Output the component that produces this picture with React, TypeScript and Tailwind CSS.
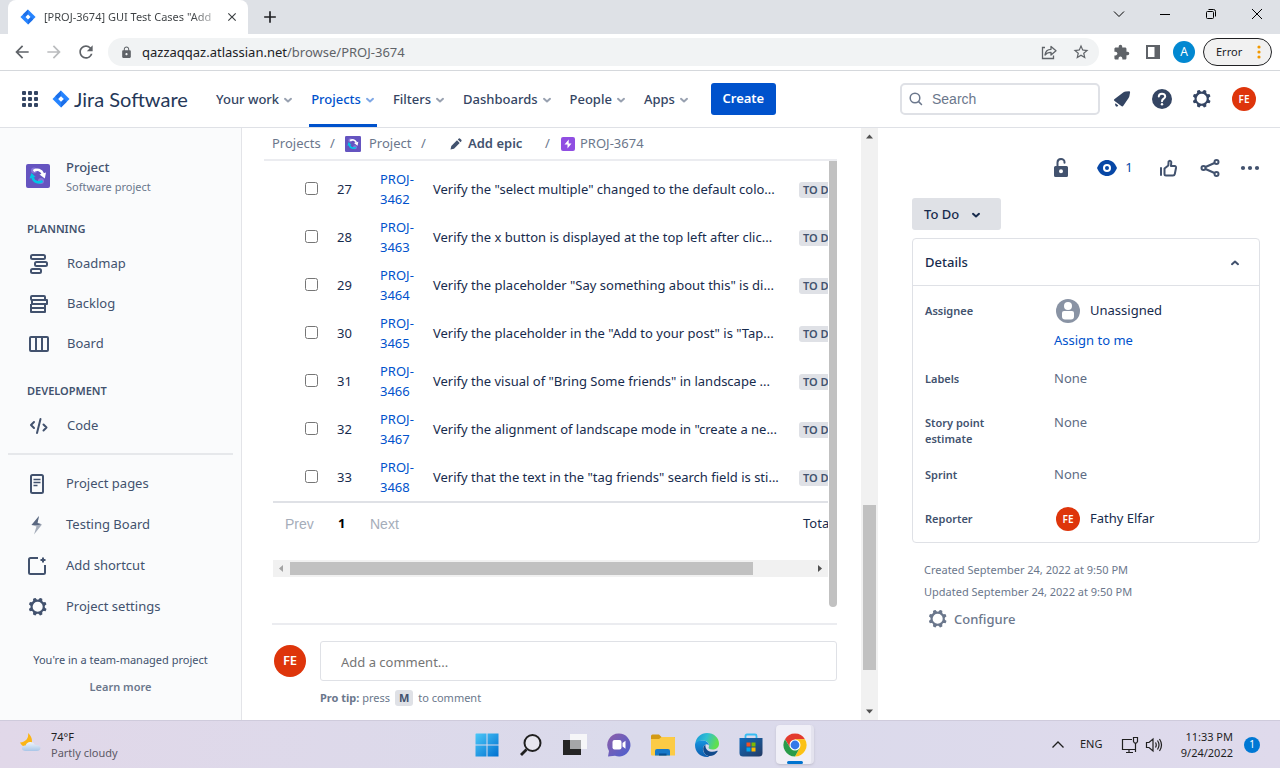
import React from "react";
import { MdArrowBack, MdArrowForward, MdRefresh, MdLock, MdStarBorder, MdExtension, MdClose, MdAdd } from "react-icons/md";

const GEAR =
  "M11.701 16.7a5.002 5.002 0 1 1 0-10.003 5.002 5.002 0 0 1 0 10.004m8.368-3.117a1.995 1.995 0 0 1-1.346-1.885c0-.876.563-1.613 1.345-1.885a.48.48 0 0 0 .315-.574 8.947 8.947 0 0 0-.836-1.993.477.477 0 0 0-.598-.195 2.04 2.04 0 0 1-1.29.08 1.988 1.988 0 0 1-1.404-1.395 2.04 2.04 0 0 1 .076-1.297.478.478 0 0 0-.196-.597 8.98 8.98 0 0 0-1.975-.826.479.479 0 0 0-.574.314 1.995 1.995 0 0 1-1.885 1.346 1.994 1.994 0 0 1-1.884-1.345.482.482 0 0 0-.575-.315c-.708.2-1.379.485-2.004.842a.47.47 0 0 0-.198.582A2.002 2.002 0 0 1 4.445 7.06a.478.478 0 0 0-.595.196 8.946 8.946 0 0 0-.833 1.994.48.48 0 0 0 .308.572 1.995 1.995 0 0 1 1.323 1.877c0 .867-.552 1.599-1.324 1.877a.479.479 0 0 0-.308.57 8.99 8.99 0 0 0 .723 1.79.477.477 0 0 0 .624.194c.595-.273 1.343-.264 2.104.238.117.077.225.185.302.3.527.8.512 1.58.198 2.188a.473.473 0 0 0 .168.628 8.946 8.946 0 0 0 2.11.897.474.474 0 0 0 .57-.313 1.995 1.995 0 0 1 1.886-1.353c.878 0 1.618.567 1.887 1.353a.475.475 0 0 0 .57.313 8.964 8.964 0 0 0 2.084-.883.473.473 0 0 0 .167-.631c-.318-.608-.337-1.393.191-2.195.077-.116.185-.225.302-.302.772-.511 1.527-.513 2.125-.23a.477.477 0 0 0 .628-.19 8.925 8.925 0 0 0 .728-1.793.478.478 0 0 0-.314-.573";

function Gear() {
  return (
    <svg viewBox="0 0 24 24" className="size-6 shrink-0" fill="currentColor" aria-hidden="true">
      <path fillRule="evenodd" d={GEAR} />
    </svg>
  );
}

function JiraMark({ className }: { className: string }) {
  return (
    <svg viewBox="0 0 18 18" className={className} aria-hidden="true">
      <path d="M9 0.5 17.5 9 9 17.5 0.5 9Z" fill="#2684ff" />
      <path d="M9 0.5 9 6 5.8 9 3.2 6.3Z" fill="#1d6fe8" />
      <path d="M9 17.5 9 12 12.2 9 14.8 11.7Z" fill="#1d6fe8" />
      <path d="M9 6.2 11.8 9 9 11.8 6.2 9Z" fill="#fff" />
    </svg>
  );
}

function ProjectMark({ className }: { className: string }) {
  return (
    <svg viewBox="0 0 24 24" className={className} aria-hidden="true">
      <rect width="24" height="24" rx="2" fill="#6554c0" />
      <circle cx="8" cy="6.5" r="3" fill="#8777d9" />
      <circle cx="15" cy="17" r="3" fill="#8777d9" />
      <path d="M7.500 7C11 4.500 15.500 6 17 10" fill="none" stroke="#fff" strokeWidth="2.600" />
      <path d="M13.500 10.500 20 8.500 18.800 14.500Z" fill="#fff" />
      <path d="M16.500 17C13 19.500 8 18.500 6.500 13.500" fill="none" stroke="#00c7e5" strokeWidth="2.600" />
      <path d="M3.500 14.500 5.500 9 9.500 13Z" fill="#00c7e5" />
    </svg>
  );
}

function Chevron() {
  return (
    <svg viewBox="0 0 10 8" className="h-2 w-2.5" fill="none" stroke="currentColor" strokeWidth="2" strokeLinecap="round" strokeLinejoin="round" aria-hidden="true">
      <path d="M2 2.800 5 5.500 8 2.800" />
    </svg>
  );
}

function Avatar({ className }: { className: string }) {
  return <span className={`flex shrink-0 items-center justify-center rounded-full bg-[#de350b] font-semibold text-white ${className}`}>FE</span>;
}

function BrowserChrome() {
  return (
    <header>
      <div className="flex h-[34px] items-end justify-between bg-[#dee1e6] pl-2">
        <div className="flex h-[34px] items-center">
          <div className="flex h-full w-60 items-center rounded-t-lg bg-white pr-2 pl-3">
            <JiraMark className="size-4 shrink-0" />
            <span className="ml-2 flex-1 bg-gradient-to-r from-[#3c4043] from-85% to-[#3c4043]/20 bg-clip-text text-[11px] whitespace-nowrap text-transparent">
              [PROJ-3674] GUI Test Cases "Add
            </span>
            <button aria-label="Close tab" className="ml-1.5 flex size-4 items-center justify-center text-[#3c4043]"><MdClose size={14} /></button>
          </div>
          <button aria-label="New tab" className="ml-3 text-[#202124]"><MdAdd size={20} /></button>
        </div>
        <div className="flex h-10 items-center text-black">
          <button aria-label="Search tabs" className="flex w-[46px] justify-center">
            <svg viewBox="0 0 12 12" className="size-3" fill="none" stroke="currentColor"><path d="M1 3.500 6 8.500 11 3.500" /></svg>
          </button>
          <button aria-label="Minimize" className="flex w-[46px] justify-center">
            <svg viewBox="0 0 12 12" className="size-3" fill="none" stroke="currentColor"><path d="M1 6.500H11" /></svg>
          </button>
          <button aria-label="Restore" className="flex w-[46px] justify-center">
            <svg viewBox="0 0 12 12" className="size-3" fill="none" stroke="currentColor"><rect x="1.500" y="3.500" width="7" height="7" rx="1" /><path d="M3.500 1.500H8.500Q10.500 1.500 10.500 3.500V8.500" /></svg>
          </button>
          <button aria-label="Close window" className="flex w-[46px] justify-center">
            <svg viewBox="0 0 12 12" className="size-3" fill="none" stroke="currentColor"><path d="M1 1 11 11M11 1 1 11" /></svg>
          </button>
        </div>
      </div>
      <div className="flex h-[37px] items-center border-b border-[#d5d8dc] bg-white pr-2 pl-3 text-[#5f6368]">
        <button aria-label="Back"><MdArrowBack size={20} /></button>
        <button aria-label="Forward" className="ml-3 text-[#babcbe]"><MdArrowForward size={20} /></button>
        <button aria-label="Reload" className="ml-3"><MdRefresh size={20} /></button>
        <div className="ml-3 flex h-7 flex-1 items-center rounded-full bg-[#f1f3f4] pr-[9px] pl-3">
          <MdLock size={13} />
          <div className="ml-[9px] flex-1 text-[13px] leading-5">
            <span className="text-[#202124]">qazzaqqaz.atlassian.net</span>/browse/PROJ-3674
          </div>
          <button aria-label="Share page">
            <svg viewBox="0 0 18 18" className="size-[18px]" fill="none" stroke="currentColor" strokeWidth="1.300">
              <path d="M5 4.500H2.500V15.500H13.500V12.500" />
              <path d="M5 12C5.500 8 8 6.300 11 6.300V3.500L16 7.800 11 12V9.300C8.500 9.300 6.500 10 5 12Z" strokeLinejoin="round" />
            </svg>
          </button>
          <button aria-label="Bookmark" className="ml-3.5"><MdStarBorder size={18} /></button>
        </div>
        <button aria-label="Extensions" className="ml-3.5"><MdExtension size={17} /></button>
        <button aria-label="Side panel" className="ml-[15px]">
          <svg viewBox="0 0 16 16" className="size-4"><path fill="currentColor" fillRule="evenodd" d="M1 1H15V15H1ZM3 3V13H9.500V3Z" /></svg>
        </button>
        <button className="ml-3 flex size-[22px] items-center justify-center rounded-full bg-[#0288d1] text-[12px] text-white">A</button>
        <button className="ml-2 flex h-7 w-[69px] items-center justify-between rounded-full border border-[#202124] bg-[#f1f1f1] pr-2.5 pl-3 text-[11px] text-[#202124]">
          Error
          <svg viewBox="0 0 4 14" className="h-3.5 w-1" fill="#f29900"><circle cx="2" cy="2" r="1.600" /><circle cx="2" cy="7" r="1.600" /><circle cx="2" cy="12" r="1.600" /></svg>
        </button>
      </div>
    </header>
  );
}

const MENU = ["Your work", "Projects", "Filters", "Dashboards", "People", "Apps"];

function JiraHeader() {
  return (
    <header className="flex h-[57px] items-center border-b border-[#dfe1e6] bg-white pr-6 pl-[22px] text-[#344563]">
      <button aria-label="App switcher">
        <svg viewBox="0 0 16 16" className="size-4" fill="currentColor">
          {[0, 6, 12].map((y) => [0, 6, 12].map((x) => <rect key={`${x}-${y}`} x={x} y={y} width="4" height="4" rx="1" />))}
        </svg>
      </button>
      <a href="#home" className="ml-[14px] flex items-center gap-1 text-[#253858]">
        <JiraMark className="size-[18px]" />
        <span className="w-[113px] font-['Lato','Open_Sans',sans-serif] text-[20px] leading-6 whitespace-nowrap">Jira Software</span>
      </a>
      <nav className="ml-[27px] flex h-full items-stretch gap-[14px]">
        {MENU.map((item) => (
          <button
            key={item}
            className={`flex items-center gap-1 border-b-[3px] px-0.5 pt-1 text-[13px] font-medium ${
              item === "Projects" ? "border-[#0052cc] text-[#0052cc]" : "border-transparent"
            }`}
          >
            {item}
            <span className="opacity-50"><Chevron /></span>
          </button>
        ))}
      </nav>
      <button className="ml-5 h-8 w-[65px] rounded-[3px] bg-[#0052cc] text-[13px] font-semibold text-white">Create</button>
      <div className="ml-auto flex h-8 w-[200px] items-center gap-2 rounded-[5px] border-2 border-[#dfe1e6] px-1.5 text-[#6b778c]">
        <svg viewBox="0 0 16 16" className="size-4 shrink-0" fill="none" stroke="currentColor" strokeWidth="1.500" strokeLinecap="round"><circle cx="7" cy="7" r="4.800" /><path d="M10.600 10.600 13.500 13.500" /></svg>
        <input aria-label="Search" placeholder="Search" className="w-full font-['Liberation_Sans',sans-serif] text-[14px] outline-none placeholder:text-[#6b778c]" />
      </div>
      <button aria-label="Notifications" className="ml-2.5">
        <svg viewBox="0 0 24 24" className="size-6" fill="currentColor">
          <path d="M4.300 12.200 13.500 5.300Q14.500 4.500 15.800 4.400L19 4.200Q20.300 4.200 20.100 5.200L19.500 8.500Q19.400 9.800 18.600 10.900L13.500 18.500Q12.500 20 11.300 19L4.300 13.800Q3.500 13 4.300 12.200Z" />
          <path d="M5.500 16.300 8.300 18.600Q7.300 20.400 5.800 19.300 4.500 18 5.500 16.300Z" />
        </svg>
      </button>
      <button aria-label="Help" className="ml-4">
        <svg viewBox="0 0 24 24" className="size-6">
          <circle cx="12" cy="12" r="10" fill="currentColor" />
          <path d="M8.800 9.500C8.800 5.800 15.200 5.800 15.200 9.400C15.200 11.700 12 11.600 12 14.200" fill="none" stroke="#fff" strokeWidth="2" strokeLinecap="round" />
          <circle cx="12" cy="17.200" r="1.200" fill="#fff" />
        </svg>
      </button>
      <button aria-label="Settings" className="ml-4"><Gear /></button>
      <button aria-label="Your profile" className="ml-[18px]"><Avatar className="size-6 text-[10px]" /></button>
    </header>
  );
}

const line = { fill: "none", stroke: "currentColor", strokeWidth: 2, strokeLinejoin: "round" as const };

const ICONS: Record<string, React.ReactNode> = {
  Roadmap: <g {...line}><rect x="5" y="3" width="14" height="4" rx="1.500" /><rect x="9" y="10" width="12" height="4" rx="1.500" /><rect x="5" y="17" width="10" height="4" rx="1.500" /></g>,
  Backlog: <g {...line}><rect x="5" y="4" width="14" height="4" rx="1" /><path d="M6 8H21V12H6ZM5 12V20H19V12M5 16H19" /></g>,
  Board: <g {...line}><rect x="4" y="5" width="18" height="14" rx="1" /><path d="M10 5V19M16 5V19" /></g>,
  Code: <g {...line} strokeLinecap="round"><path d="M8 8 5 11 8 14M17.500 10.500 20.500 13.500 17.500 16.500M14.500 5 11 19" /></g>,
  "Project pages": <g {...line}><rect x="5" y="3" width="12" height="18" rx="1.500" /><path d="M7.500 7.500H14.500M7.500 10.500H14.500M7.500 13.500H11.500" strokeWidth="1.700" /></g>,
  "Testing Board": <g><path d="M13 3 5.500 12 10.500 13.500 8 21.500 16 11.500 11.500 10Z" fill="#a5adba" /><path d="M13 3 5.500 12 13 12 15 11 11.500 10Z" fill="#42526e" opacity=".75" /></g>,
  "Add shortcut": <g {...line}><path d="M12 4H4.500Q3 4 3 5.500V18.500Q3 20 4.500 20H17.500Q19 20 19 18.500V11M17 3.500V8.500M14.500 6H19.500" /></g>,
  "Project settings": <path fill="currentColor" fillRule="evenodd" d={GEAR} />,
};

function NavRow({ label, tall }: { label: string; tall?: boolean }) {
  return (
    <a href={`#${label.replace(/ /g, "-")}`} className={`flex items-center pl-[26px] ${tall ? "h-[41px] gap-4" : "h-10 gap-[17px] pt-0.5"}`}>
      <svg viewBox="0 0 24 24" className="size-6 shrink-0" aria-hidden="true">{ICONS[label]}</svg>
      {label}
    </a>
  );
}

function Sidebar() {
  return (
    <aside className="w-[242px] shrink-0 border-r border-[#e3e4e8] bg-[#fafbfc] pt-[29px] text-[13px] text-[#42526e]">
      <div className="flex items-start gap-4 pl-[26px]">
        <ProjectMark className="mt-[7px] size-6" />
        <div className="leading-5">
          <div className="font-medium">Project</div>
          <div className="text-[11px] text-[#6b778c]">Software project</div>
        </div>
      </div>
      <h2 className="mt-6 mb-1.5 pl-[27px] text-[11px] leading-4 font-semibold">PLANNING</h2>
      <nav aria-label="Planning">
        <NavRow label="Roadmap" />
        <NavRow label="Backlog" />
        <NavRow label="Board" />
      </nav>
      <h2 className="mt-5 mb-1.5 pl-[27px] text-[11px] leading-4 font-semibold">DEVELOPMENT</h2>
      <NavRow label="Code" />
      <hr className="mx-2 my-2 border-t-2 border-[#e6e8eb]" />
      <nav aria-label="Project">
        <NavRow label="Project pages" tall />
        <NavRow label="Testing Board" tall />
        <NavRow label="Add shortcut" tall />
        <NavRow label="Project settings" tall />
      </nav>
      <div className="mt-[23px] text-center text-[11px] leading-5">
        <p>You're in a team-managed project</p>
        <a href="#learn" className="mt-[7px] inline-block font-semibold text-[#6b778c]">Learn more</a>
      </div>
    </aside>
  );
}

const ROWS: [number, string][] = [
  [27, 'Verify the "select multiple" changed to the default colo...'],
  [28, "Verify the x button is displayed at the top left after clic..."],
  [29, 'Verify the placeholder "Say something about this" is di...'],
  [30, 'Verify the placeholder in the "Add to your post" is "Tap...'],
  [31, 'Verify the visual of "Bring Some friends" in landscape ...'],
  [32, 'Verify the alignment of landscape mode in "create a ne...'],
  [33, 'Verify that the text in the "tag friends" search field is sti...'],
];

function IssueTable() {
  return (
    <div className="flex">
      <div className="min-w-0 flex-1 overflow-hidden pt-1 pb-[30px] pl-[9px]">
        <div className="mr-px overflow-hidden">
          <table className="w-[600px] table-fixed text-left text-[13px] text-[#172b4d]">
            <colgroup>
              <col className="w-16" />
              <col className="w-[43px]" />
              <col className="w-[53px]" />
              <col />
              <col className="w-[74px]" />
            </colgroup>
            <tbody>
              {ROWS.map(([n, text]) => (
                <tr key={n} className="h-12">
                  <td className="pb-0.5 pl-8"><input type="checkbox" aria-label={`Select row ${n}`} className="block size-[13px]" /></td>
                  <td className="pt-0.5">{n}</td>
                  <td className="leading-5"><a href={`#PROJ-${3435 + n}`} className="block text-[#0052cc]">PROJ-<br />{3435 + n}</a></td>
                  <td className="pt-0.5 whitespace-nowrap">{text}</td>
                  <td className="pt-0.5"><span className="inline-block rounded-[3px] bg-[#dfe1e6] px-1 text-[11px] leading-4 font-semibold text-[#42526e]">TO DO</span></td>
                </tr>
              ))}
            </tbody>
          </table>
          <div className="flex h-11 w-[600px] items-center border-t-2 border-[#dfe1e6] pl-3 font-['Liberation_Sans',sans-serif] text-[14px] text-[#a5adba]">
            <button className="w-[53px] text-left">Prev</button>
            <button className="w-8 text-left font-['Noto_Sans',sans-serif] text-[13px] font-bold text-black">1</button>
            <button>Next</button>
            <span className="ml-auto w-[70px] font-['Noto_Sans',sans-serif] text-[13px] text-[#172b4d]">Total: 33</span>
          </div>
        </div>
        <div className="mt-[15px] mr-px flex h-[17px] items-center justify-between bg-[#f1f1f1]">
          <div className="flex h-full flex-1 items-center">
            <svg viewBox="0 0 17 17" className="size-[17px] shrink-0" fill="#a3a3a3"><path d="M10 5V12L6 8.500Z" /></svg>
            <div className="h-[13px] w-[86%] bg-[#c1c1c1]" />
          </div>
          <svg viewBox="0 0 17 17" className="size-[17px] shrink-0" fill="#505050"><path d="M7 5V12L11 8.500Z" /></svg>
        </div>
      </div>
      <div className="w-2 rounded-b bg-[#c1c1c1]" />
    </div>
  );
}

function Content() {
  return (
    <main className="min-w-0 flex-1 bg-white pr-6 pl-[22px]">
      <nav aria-label="Breadcrumb" className="flex h-[33px] items-center border-b-2 border-[#ebecf0] pl-2 text-[13px] text-[#6b778c]">
        <a href="#projects" className="w-[58px]">Projects</a>
        <span className="w-[15px]">/</span>
        <a href="#project" className="flex w-[76px] items-center gap-2"><ProjectMark className="size-4" />Project</a>
        <span className="w-[29px]">/</span>
        <button className="flex w-[95px] items-center gap-1.5 font-semibold text-[#42526e]">
          <svg viewBox="0 0 12 12" className="size-3" fill="currentColor"><path d="M0.500 11.500 1.300 8 7 2.300 9.700 5 4 10.700ZM7.800 1.500 8.800 0.600Q9.500 0 10.200 0.700L11.300 1.800Q12 2.500 11.400 3.200L10.500 4.200Z" /></svg>
          Add epic
        </button>
        <span className="w-4">/</span>
        <a href="#PROJ-3674" className="flex items-center gap-[5px]">
          <svg viewBox="0 0 14 14" className="size-3.5"><rect width="14" height="14" rx="2" fill="#904ee2" /><path d="M7.700 2.500 3.500 7.500H6.500V11.500L10.500 6.500H7.700Z" fill="#fff" /></svg>
          PROJ-3674
        </a>
      </nav>
      <IssueTable />
      <section className="mt-4 ml-2 border-t-2 border-[#ebecf0] pt-4">
        <div className="flex items-center gap-3.5 pl-0.5">
          <Avatar className="size-8 text-[13px]" />
          <input aria-label="Comment" placeholder="Add a comment..." className="h-10 min-w-0 flex-1 rounded-[3px] border border-[#dfe1e6] px-5 pt-0.5 text-[13px] outline-none placeholder:text-[#757575]" />
        </div>
        <p className="mt-2 pl-12 text-[11px] leading-[18px] text-[#6b778c]">
          <strong>Pro tip:</strong> press <kbd className="mx-0.5 inline-block rounded-[3px] bg-[#dfe1e6] px-1 font-['Noto_Sans',sans-serif] leading-4 font-bold text-[#42526e]">M</kbd> to comment
        </p>
      </section>
    </main>
  );
}

function PageScrollbar() {
  return (
    <div className="flex w-[17px] shrink-0 flex-col items-center bg-[#f1f1f1]">
      <svg viewBox="0 0 17 17" className="size-[17px] shrink-0" fill="#505050"><path d="M5 10.500H12L8.500 6.500Z" /></svg>
      <div className="grow-[360]" />
      <div className="w-[13px] grow-[165] bg-[#c1c1c1]" />
      <div className="grow-[33]" />
      <svg viewBox="0 0 17 17" className="size-[17px] shrink-0" fill="#505050"><path d="M5 6.500H12L8.500 10.500Z" /></svg>
    </div>
  );
}

function Details() {
  const dt = "w-[129px] shrink-0 pr-10 text-[11px] leading-4 font-semibold text-[#42526e]";
  return (
    <aside className="w-[402px] shrink-0 bg-white pt-6 pr-5 pl-[34px] text-[13px] text-[#172b4d]">
      <div className="-mr-0.5 flex h-8 items-center justify-end text-[#42526e]">
        <button aria-label="Unlock">
          <svg viewBox="0 0 24 24" className="size-6"><path d="M8.500 10V6.500C8.500 2 15.500 2 15.500 6V6.800" fill="none" stroke="currentColor" strokeWidth="2" strokeLinecap="round" /><path fillRule="evenodd" fill="currentColor" d="M6.500 10H17.500Q19 10 19 11.500V19.500Q19 21 17.500 21H6.500Q5 21 5 19.500V11.500Q5 10 6.500 10ZM12 13.200A2 2 0 1 0 12 17.200 2 2 0 1 0 12 13.200Z" /></svg>
        </button>
        <button aria-label="Watchers" className="ml-[22px] flex items-center gap-1 text-[#0747a6]">
          <svg viewBox="0 0 24 24" className="size-6"><path fill="currentColor" d="M2 12C4.500 6 8 4 12 4S19.500 6 22 12C19.500 18 16 20 12 20S4.500 18 2 12Z" /><circle cx="12" cy="12" r="4" fill="#fff" /><circle cx="12" cy="12" r="2" fill="currentColor" /></svg>
          <span className="w-3">1</span>
        </button>
        <button aria-label="Like" className="ml-[21px]">
          <svg viewBox="0 0 24 24" className="size-6" {...line} strokeLinecap="round"><path d="M5 12V19M8.500 18V12.500L12.300 9.500 12.600 5.500Q14.500 4 15.300 6L15 10H18.500Q20.300 10.200 20 12L18.800 18Q18.500 19.500 17 19.500H10Q8.500 19.500 8.500 18Z" /></svg>
        </button>
        <button aria-label="Share" className="ml-[18px]">
          <svg viewBox="0 0 24 24" className="size-6" {...line}><circle cx="5.500" cy="12" r="2" /><circle cx="18.500" cy="6" r="2" /><circle cx="18.500" cy="18" r="2" /><path d="M7.500 11 16.500 7M7.500 13 16.500 17" /></svg>
        </button>
        <button aria-label="More actions" className="ml-4">
          <svg viewBox="0 0 24 24" className="size-6" fill="currentColor"><circle cx="5" cy="12" r="2.100" /><circle cx="12" cy="12" r="2.100" /><circle cx="19" cy="12" r="2.100" /></svg>
        </button>
      </div>
      <button className="mt-3.5 flex h-8 w-[89px] items-center gap-3 rounded-[3px] bg-[#dfe1e6] pt-0.5 pl-3 font-medium">To Do <Chevron /></button>
      <section className="mt-2 rounded border border-[#dfe1e6]">
        <h2 className="border-b border-[#dfe1e6]">
          <button className="flex h-[46px] w-full items-center justify-between pt-0.5 pr-[19px] pl-3 font-medium">
            Details
            <span className="rotate-180 text-[#42526e]"><Chevron /></span>
          </button>
        </h2>
        <dl className="pt-[13px] pl-3">
          <div className="flex h-[69px]">
            <dt className={`${dt} pt-1`}>Assignee</dt>
            <dd>
              <span className="flex items-center gap-2.5 pl-0.5">
                <svg viewBox="0 0 24 24" className="size-6"><circle cx="12" cy="12" r="12" fill="#8993a4" /><circle cx="12" cy="7" r="4" fill="#fff" /><path d="M6 14Q6 12 8 12H16Q18 12 18 14V17.500Q18 20.500 15 20.500H9Q6 20.500 6 17.500Z" fill="#fff" /></svg>
                Unassigned
              </span>
              <a href="#assign" className="mt-[7px] block leading-5 text-[#0052cc]">Assign to me</a>
            </dd>
          </div>
          <div className="flex h-11">
            <dt className={`${dt} pt-[3px]`}>Labels</dt>
            <dd className="leading-5 text-[#5e6c84]">None</dd>
          </div>
          <div className="flex h-[52px]">
            <dt className={`${dt} pt-[3px]`}>Story point estimate</dt>
            <dd className="leading-5 text-[#5e6c84]">None</dd>
          </div>
          <div className="flex h-[43px]">
            <dt className={`${dt} pt-[3px]`}>Sprint</dt>
            <dd className="leading-5 text-[#5e6c84]">None</dd>
          </div>
          <div className="flex h-[35px]">
            <dt className={`${dt} pt-1`}>Reporter</dt>
            <dd className="flex h-6 items-center gap-2.5 pl-0.5"><Avatar className="size-6 text-[10px]" />Fathy Elfar</dd>
          </div>
        </dl>
      </section>
      <div className="mt-4 pl-3 text-[11px] leading-[22px] text-[#6b778c]">
        <p>Created September 24, 2022 at 9:50 PM</p>
        <p>Updated September 24, 2022 at 9:50 PM</p>
        <button className="flex h-8 items-center gap-1 pl-0.5 text-[13px] font-medium"><Gear />Configure</button>
      </div>
    </aside>
  );
}

function TaskIcon({ label, children }: { label: string; children: React.ReactNode }) {
  return (
    <button aria-label={label} className="flex h-full w-11 items-center justify-center">
      <svg viewBox="0 0 24 24" className="size-6">{children}</svg>
    </button>
  );
}

function Taskbar() {
  return (
    <footer className="grid h-12 grid-cols-[1fr_auto_1fr] items-center border-t border-[#cfcbdc] bg-gradient-to-r from-[#e1d8e9] via-[#dadaeb] to-[#dfdaec] text-[11px] text-[#1f1f1f]">
      <div className="flex items-center gap-2 pl-[19px]">
        <svg viewBox="0 0 24 24" className="size-6" aria-hidden="true">
          <defs><linearGradient id="cloud" x1="0" y1="0" x2="0" y2="1"><stop offset="0" stopColor="#f0f5fb" /><stop offset="1" stopColor="#a9c6e8" /></linearGradient></defs>
          <path d="M9 0C10 5 7 9 1 9.500C3 15 12 16 13 8.500Q13 3 9 0Z" fill="#fbb516" />
          <path d="M6 18Q2.500 17.500 3 14.500 4 12 6.500 12.500 8 8.500 12 9 15 9.300 16 12 21 11.500 21.500 15 21 18 18 18Z" fill="url(#cloud)" />
        </svg>
        <div className="leading-4"><div>74°F</div><div className="text-[#5c5866]">Partly cloudy</div></div>
      </div>
      <div className="flex h-full items-center pl-0.5">
        <TaskIcon label="Start">
          <defs><linearGradient id="win" x1="0" y1="0" x2="1" y2="1"><stop offset="0" stopColor="#4cc8f8" /><stop offset="1" stopColor="#0070d0" /></linearGradient></defs>
          <path fill="url(#win)" d="M1 0.500H11.500V11.500H0.500V1ZM12.500 0.500H23.500V11.500H12.500ZM0.500 12.500H11.500V23.500H0.500ZM12.500 12.500H23.500V23.500H12.500Z" />
        </TaskIcon>
        <TaskIcon label="Search"><g fill="none" stroke="#202020"><circle cx="13.500" cy="10" r="8" strokeWidth="2" fill="#e7e6ef" /><path d="M7.500 16.500 2 22" strokeWidth="2.800" /></g></TaskIcon>
        <TaskIcon label="Task view"><rect x="7" y="1" width="17" height="15" fill="#f6f6f8" /><rect x="0" y="7" width="18" height="15" fill="#252525" /><rect x="7" y="7" width="11" height="9" fill="#a5a6a8" /></TaskIcon>
        <TaskIcon label="Chat">
          <defs><linearGradient id="chat" x1="0" y1="0" x2="1" y2="1"><stop offset="0" stopColor="#8f5fa8" /><stop offset="1" stopColor="#4a5fd0" /></linearGradient></defs>
          <path fill="url(#chat)" d="M12 0.500A11.500 11.500 0 1 1 8 22.800L1 23.500 2 18A11.500 11.500 0 0 1 12 .5Z" /><rect x="5.500" y="7" width="9" height="9.500" rx="2" fill="#fff" /><path d="M15.500 10 18.500 7.800V15.800L15.500 13.500Z" fill="#fff" />
        </TaskIcon>
        <TaskIcon label="File Explorer">
          <path d="M0 3Q0 1.500 1.500 1.500H8L10.500 4H23Q24 4 24 5V11H0Z" fill="#d39a15" /><path d="M0 6H8L10.500 4H23Q24 4 24 5V22.500H1Q0 22.500 0 21.500Z" fill="#fccb45" /><path d="M4 22.500V18Q4 16 6 16H17Q19 16 19 18V22.500Z" fill="#1779c9" /><path d="M8 22.500V20.500H15.500V22.500Z" fill="#084f91" />
        </TaskIcon>
        <TaskIcon label="Edge">
          <defs>
            <linearGradient id="edgeA" x1="0" y1="0" x2="1" y2="0.300"><stop offset="0" stopColor="#1594d8" /><stop offset=".5" stopColor="#30bfd3" /><stop offset="1" stopColor="#60df4f" /></linearGradient>
            <linearGradient id="edgeB" x1="0" y1="0" x2="0" y2="1"><stop offset="0" stopColor="#1595e0" /><stop offset="1" stopColor="#0f5cae" /></linearGradient>
          </defs>
          <path d="M0.300 11C1 4 6 0 12 0C19 0 24 5 24 10.500C24 14.500 21 16.500 17.500 16.500C14.500 16.500 13 15.300 13.700 14.300C15.500 11 12 7.500 8 7.500C4 7.500 1 9.500 .3 11Z" fill="url(#edgeA)" />
          <path d="M0 12C0 8.500 4 7 8 7.500C12 8 14 10 13.800 12.500C11 9.500 7.500 13 8 17C8.500 20.500 11.500 23 14.500 23.700C6 25 0 19.500 0 12Z" fill="url(#edgeB)" />
          <path d="M10.500 11.500C7.500 13.500 7.500 18 10 21C13 24.500 19.500 23.500 22.500 18.500C23 17.800 22.500 17.500 22 17.800C16 20.500 9.500 17.500 10.500 11.500Z" fill="#114a8b" />
        </TaskIcon>
        <TaskIcon label="Store">
          <defs><linearGradient id="store" x1="0" y1="0" x2="1" y2="1"><stop offset="0" stopColor="#0f6cbd" /><stop offset="1" stopColor="#253a63" /></linearGradient></defs>
          <path d="M6.500 6V3Q6.500 1.500 8 1.500H16Q17.500 1.500 17.500 3V6" fill="none" stroke="#37bdf3" strokeWidth="1.800" /><path d="M.5 5H23.500V20Q23.500 23.500 20 23.500H4Q.5 23.500 .5 20Z" fill="url(#store)" />
          <rect x="7.500" y="9.500" width="4" height="4" fill="#f25022" /><rect x="12.500" y="9.500" width="4" height="4" fill="#7fba00" /><rect x="7.500" y="14.500" width="4" height="4" fill="#00a4ef" /><rect x="12.500" y="14.500" width="4" height="4" fill="#ffb900" />
        </TaskIcon>
        <div className="w-11 pl-[3px]">
          <button aria-label="Chrome" className="relative flex h-[39px] w-[38px] items-center justify-center rounded border-r-[3px] border-[#e4e3ee] bg-[#f0eff7] pl-0.5 shadow-sm">
            <svg viewBox="0 0 24 24" className="size-6">
              <circle cx="12" cy="12" r="11.500" fill="#fff" />
              <path d="M2 6.250A11.500 11.500 0 0 1 22 6.250L12 6.500 7.200 14.800Z" fill="#e33b2e" />
              <path d="M22 6.250A11.500 11.500 0 0 1 12 23.500L16.800 14.800 12 6.250Z" fill="#fbc116" />
              <path d="M12 23.500A11.500 11.500 0 0 1 2 6.250L7.200 14.800 16.800 14.800Z" fill="#2a9c4a" />
              <circle cx="12" cy="12" r="5.500" fill="#fff" /><circle cx="12" cy="12" r="4.400" fill="#3478e8" />
            </svg>
            <span className="absolute bottom-0 h-[3px] w-4 rounded-full bg-[#0073cf]" />
          </button>
        </div>
      </div>
      <div className="flex items-center justify-end pr-5">
        <svg viewBox="0 0 14 14" className="size-3.5" fill="none" stroke="currentColor" strokeWidth="1.300"><path d="M1.500 9.500 7 4 12.500 9.500" /></svg>
        <span className="ml-[15px] w-6">ENG</span>
        <svg viewBox="0 0 18 18" className="ml-[17px] size-[18px]" fill="none" stroke="currentColor" strokeWidth="1.200"><path d="M11 3.500H1.500V13.500H14.500V9M5 16.500H12M8 13.500V16.500M12.500 1.500H16.500V5.500L15.500 7H13.500L12.500 5.500ZM14.500 7V16" /></svg>
        <svg viewBox="0 0 18 18" className="ml-1.5 size-[18px]" fill="none" stroke="currentColor" strokeWidth="1.200"><path d="M1.500 6.500H4L8 3V15L4 11.500H1.500ZM10.500 6.500Q12 9 10.500 11.500M12.500 4.500Q15.500 9 12.500 13.500M14.500 3Q18.500 9 14.500 15" /></svg>
        <div className="w-[70px] text-right leading-4"><div>11:33 PM</div><div>9/24/2022</div></div>
        <span className="ml-[11px] flex size-4 items-center justify-center rounded-full bg-[#0078d4] text-[10px] text-white">1</span>
      </div>
    </footer>
  );
}

export default function App() {
  return (
    <div className="flex min-h-screen flex-col bg-white font-['Noto_Sans','Open_Sans',sans-serif]">
      <BrowserChrome />
      <JiraHeader />
      <div className="flex flex-1">
        <Sidebar />
        <Content />
        <PageScrollbar />
        <Details />
      </div>
      <Taskbar />
    </div>
  );
}
